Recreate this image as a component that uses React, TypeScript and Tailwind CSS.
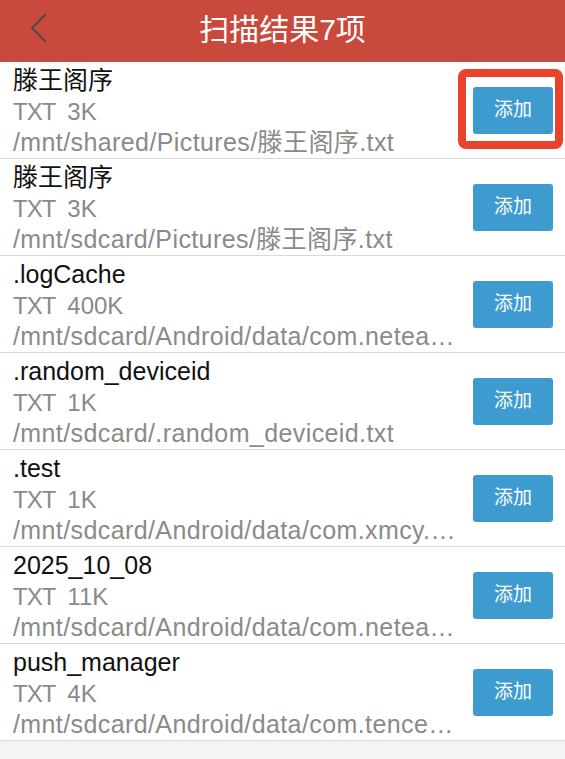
import React from "react";

type Item = { name: string; size: string; path: string };

const items: Item[] = [
  { name: "滕王阁序", size: "3K", path: "/mnt/shared/Pictures/滕王阁序.txt" },
  { name: "滕王阁序", size: "3K", path: "/mnt/sdcard/Pictures/滕王阁序.txt" },
  { name: ".logCache", size: "400K", path: "/mnt/sdcard/Android/data/com.netea…" },
  { name: ".random_deviceid", size: "1K", path: "/mnt/sdcard/.random_deviceid.txt" },
  { name: ".test", size: "1K", path: "/mnt/sdcard/Android/data/com.xmcy.…" },
  { name: "2025_10_08", size: "11K", path: "/mnt/sdcard/Android/data/com.netea…" },
  { name: "push_manager", size: "4K", path: "/mnt/sdcard/Android/data/com.tence…" },
];

export default function App() {
  return (
    <div
      className="min-h-screen bg-[#f4f4f4]"
      style={{ fontFamily: '"Liberation Sans", "Noto Sans CJK SC", sans-serif' }}
    >
      <header className="relative flex h-[62px] items-center justify-center bg-[#c94a3d] pb-[3px]">
        <svg
          className="absolute left-[29px] top-[13px]"
          width="20"
          height="30"
          viewBox="0 0 20 30"
          fill="none"
        >
          <polyline
            points="16,2 3,15 16,28"
            stroke="#4a4a4a"
            strokeWidth="2"
            strokeLinecap="square"
          />
        </svg>
        <h1 className="text-[30px] leading-none text-white">扫描结果7项</h1>
      </header>
      <div className="bg-white">
        {items.map((it, i) => (
          <div
            key={i}
            className="flex h-[97px] items-center gap-[13px] border-b border-[#d9d9d9] pl-[13px] pr-[12px]"
          >
            <div className="min-w-0 flex-1 self-stretch pt-[3px]">
              <div className="truncate text-[25px] leading-[31px] text-[#111]">{it.name}</div>
              <div className="flex text-[24px] leading-[31px] text-[#8a8a8a]">
                <span className="tracking-[-1px]">TXT</span>
                <span className="ml-[12px]">{it.size}</span>
              </div>
              <div className="truncate text-[25px] leading-[31px] tracking-[0.4px] text-[#8a8a8a]">
                {it.path}
              </div>
            </div>
            <div className="relative shrink-0">
              <button className="flex h-[47px] w-[80px] items-center justify-center rounded-[3px] bg-[#3d9bd0] text-[19px] text-white">
                添加
              </button>
              {i === 0 && (
                <div className="pointer-events-none absolute -bottom-[15px] -left-[15px] -right-[10px] -top-[18px] rounded-[8px] border-[8px] border-[#e9432c]" />
              )}
            </div>
          </div>
        ))}
      </div>
    </div>
  );
}
